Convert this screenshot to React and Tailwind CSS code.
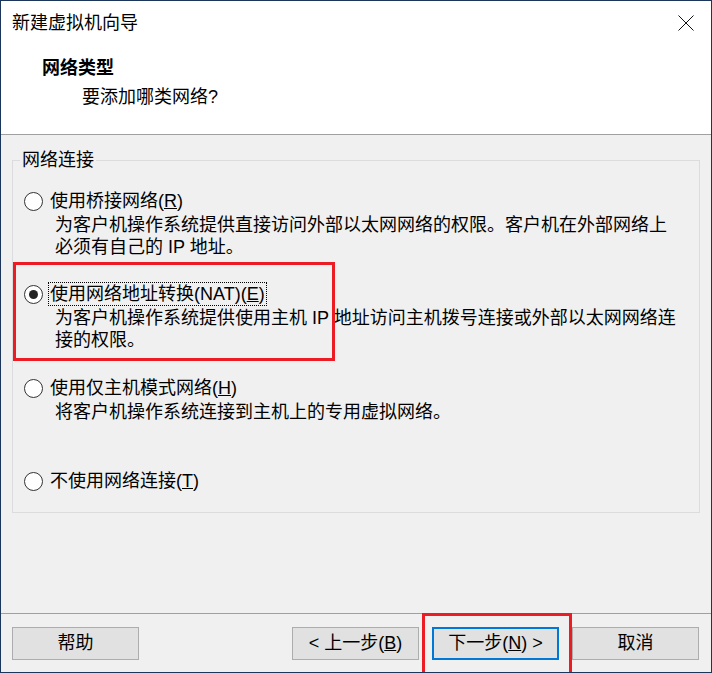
import React from 'react';

const font = "font-['Liberation_Sans','Noto_Sans_CJK_SC',sans-serif]";

const Radio = ({ checked }) => (
  <span className="w-[19px] h-[19px] rounded-full border border-[#333333] bg-white flex items-center justify-center shrink-0">
    {checked && <span className="w-[9px] h-[9px] rounded-full bg-[#222222]"></span>}
  </span>
);

const Option = ({ checked, focused, label, lines, className = '' }) => (
  <div className={className}>
    <div className="flex items-center pl-[11px] h-[22px]">
      <Radio checked={checked} />
      <span
        className={`ml-[6px] px-px leading-[22px] whitespace-nowrap ${
          focused ? 'outline-1 outline-dotted outline-black' : ''
        }`}
      >
        {label}
      </span>
    </div>
    {lines && (
      <div className="pl-[42px] leading-[22px] whitespace-nowrap mt-[2px]">
        {lines.map((l, i) => (
          <div key={i}>{l}</div>
        ))}
      </div>
    )}
  </div>
);

const Button = ({ children, primary }) => (
  <button
    className={`w-[127px] h-[33px] bg-[#e1e1e1] flex items-center justify-center text-[18px] text-black ${
      primary ? 'border-2 border-[#0078d7]' : 'border border-[#adadad]'
    }`}
  >
    {children}
  </button>
);

export default function App() {
  return (
    <div className={`${font} relative w-[712px] h-[673px] border border-[#1c355a] bg-[#f0f0f0] flex flex-col text-[18px] text-black overflow-hidden`}>
      {/* title bar */}
      <div className="h-[43px] bg-white flex items-center justify-between pl-[11px] pr-[17px]">
        <span className="leading-[22px]">新建虚拟机向导</span>
        <svg width="16" height="16" viewBox="0 0 16 16" className="mt-[1px]">
          <path d="M0.5 0.5 L15.5 15.5 M15.5 0.5 L0.5 15.5" stroke="#111" strokeWidth="1" fill="none" />
        </svg>
      </div>

      {/* header */}
      <div className="bg-white pl-[41px] pt-[13px] pb-[26px] border-b border-[#a0a0a0]">
        <div className="font-bold leading-[22px]">网络类型</div>
        <div className="pl-[40px] mt-[7px] leading-[22px]">要添加哪类网络?</div>
      </div>

      {/* body */}
      <div className="flex-1 px-[11px]">
        <fieldset className="mt-[14px] border border-[#dcdcdc] pb-[20px]">
          <legend className="ml-[7px] px-[2px] leading-[22px]">网络连接</legend>
          <Option
            className="mt-[19px]"
            label={<>使用桥接网络(<u>R</u>)</>}
            lines={['为客户机操作系统提供直接访问外部以太网网络的权限。客户机在外部网络上', '必须有自己的 IP 地址。']}
          />
          <Option
            className="mt-[25px]"
            checked
            focused
            label={<>使用网络地址转换(NAT)(<u>E</u>)</>}
            lines={['为客户机操作系统提供使用主机 IP 地址访问主机拨号连接或外部以太网网络连', '接的权限。']}
          />
          <Option
            className="mt-[26px]"
            label={<>使用仅主机模式网络(<u>H</u>)</>}
            lines={['将客户机操作系统连接到主机上的专用虚拟网络。']}
          />
          <Option className="mt-[47px]" label={<>不使用网络连接(<u>T</u>)</>} />
        </fieldset>
      </div>

      {/* footer */}
      <div className="h-[59px] border-t border-[#a0a0a0] flex items-start pt-[13px] pl-[11px] pr-[12px]">
        <Button>帮助</Button>
        <div className="flex-1"></div>
        <div className="flex gap-[13px]">
          <Button>&lt; 上一步(<u>B</u>)</Button>
          <Button primary>下一步(<u>N</u>) &gt;</Button>
          <Button>取消</Button>
        </div>
      </div>

      {/* annotation boxes */}
      <div className="absolute left-[12px] top-[261px] w-[322px] h-[99px] border-[3px] border-[#ec1c24]"></div>
      <div className="absolute left-[421px] top-[612px] w-[150px] h-[70px] border-[3px] border-[#ec1c24]"></div>
    </div>
  );
}
